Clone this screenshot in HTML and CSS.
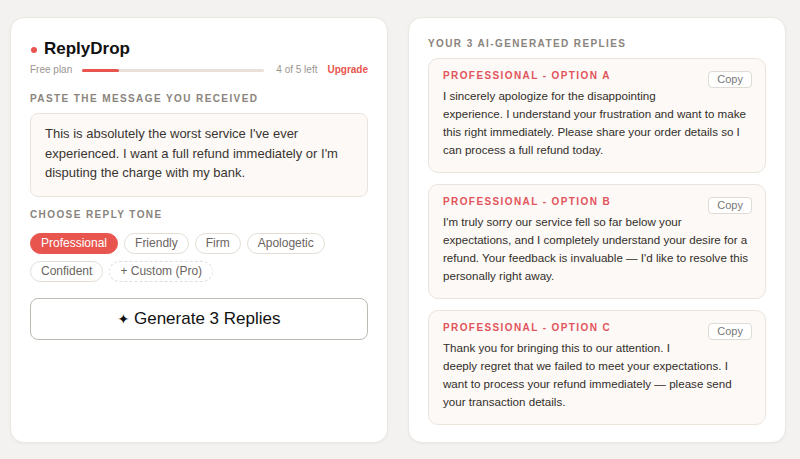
FILE: index.html
```html
<!DOCTYPE html>
<html lang="en">
<head>
  <meta charset="UTF-8">
  <meta name="viewport" content="width=device-width, initial-scale=1.0">
  <title>ReplyDrop</title>
  <link rel="stylesheet" href="styles.css">
</head>
<body>

<div class="app">
  <section class="panel">
    <div class="brand"><span class="brand-dot"></span>ReplyDrop</div>
    <div class="plan">
      <span class="plan-name">Free plan</span>
      <div class="plan-bar"><div class="plan-fill" style="width:20%"></div></div>
      <span class="plan-left">4 of 5 left</span>
      <a class="upgrade" href="#">Upgrade</a>
    </div>

    <div class="label label-message">Paste the message you received</div>
    <div class="message">This is absolutely the worst service I've ever experienced. I want a full refund immediately or I'm disputing the charge with my bank.</div>

    <div class="label label-tone">Choose reply tone</div>
    <div class="tones">
      <button class="tone active">Professional</button>
      <button class="tone">Friendly</button>
      <button class="tone">Firm</button>
      <button class="tone">Apologetic</button>
      <button class="tone">Confident</button>
      <button class="tone custom">+ Custom (Pro)</button>
    </div>

    <button class="generate"><span class="spark">&#10022;</span> Generate 3 Replies</button>
  </section>

  <section class="panel">
    <div class="label label-top">Your 3 AI-generated replies</div>

    <div class="reply">
      <button class="copy">Copy</button>
      <div class="reply-tag">Professional - Option A</div>
      <p>I sincerely apologize for the disappointing experience. I understand your frustration and want to make this right immediately. Please share your order details so I can process a full refund today.</p>
    </div>

    <div class="reply">
      <button class="copy">Copy</button>
      <div class="reply-tag">Professional - Option B</div>
      <p>I'm truly sorry our service fell so far below your expectations, and I completely understand your desire for a refund. Your feedback is invaluable — I'd like to resolve this personally right away.</p>
    </div>

    <div class="reply">
      <button class="copy">Copy</button>
      <div class="reply-tag">Professional - Option C</div>
      <p>Thank you for bringing this to our attention. I deeply regret that we failed to meet your expectations. I want to process your refund immediately — please send your transaction details.</p>
    </div>
  </section>
</div>

</body>
</html>
```

FILE: styles.css
```css
body {
  margin: 0;
  background: #f3f2f0;
  font-family: "Liberation Sans", Arial, sans-serif;
  color: #3a3531;
}
.app {
  display: grid;
  grid-template-columns: 378px 378px;
  gap: 20px;
  padding: 17px 14px 16px 10px;
}
.panel {
  box-sizing: border-box;
  height: 426px;
  background: #fff;
  border: 1px solid #ebe7e2;
  border-radius: 14px;
  box-shadow: 0 1px 3px rgba(0,0,0,0.04);
  padding: 21px 19px 19px;
}

/* brand + plan usage */
.brand {
  display: flex;
  align-items: center;
  font-size: 17px;
  line-height: 20px;
  font-weight: bold;
  color: #111;
}
.brand-dot {
  width: 6px;
  height: 6px;
  border-radius: 50%;
  background: #e8554e;
  margin: 1px 7px 0 1px;
}
.plan {
  display: flex;
  align-items: center;
  gap: 10px;
  margin-top: 4px;
  font-size: 10px;
  line-height: 14px;
  color: #9a958f;
}
.plan-bar {
  flex: 1;
  height: 3px;
  margin-right: 2px;
  background: #e9e0d7;
  border-radius: 2px;
}
.plan-fill {
  height: 100%;
  background: #e8554e;
  border-radius: 2px;
}
.upgrade {
  color: #e8554e;
  font-weight: bold;
  text-decoration: none;
}

/* section labels */
.label {
  font-size: 10px;
  line-height: 14px;
  font-weight: bold;
  letter-spacing: 1.4px;
  text-transform: uppercase;
  color: #8a847d;
}
.label-message {
  margin: 15px 0 7px;
}
.label-tone {
  margin: 11px 0 11px;
}
.label-top {
  margin: -2px 0 7px;
}
.message {
  background: #fcf9f6;
  border: 1px solid #ebe4dc;
  border-radius: 8px;
  padding: 10px 14px 13px;
  font-size: 13px;
  line-height: 19.5px;
}

/* tone chips */
.tones {
  display: flex;
  flex-wrap: wrap;
  gap: 7px 6px;
}
.tone {
  font-family: inherit;
  font-size: 12px;
  line-height: 13px;
  padding: 3px 10px;
  border: 1px solid #e3ddd6;
  border-radius: 999px;
  background: #fff;
  color: #6b655f;
  cursor: pointer;
}
.tone.active {
  background: #e8554e;
  border-color: #e8554e;
  color: #fff;
}
.tone.custom {
  border-style: dashed;
}
.generate {
  display: block;
  width: 100%;
  height: 42px;
  margin-top: 16px;
  font-family: inherit;
  font-size: 17px;
  color: #111;
  background: #fff;
  border: 1px solid #bfbab4;
  border-radius: 8px;
  cursor: pointer;
}
.spark {
  font-family: "DejaVu Sans", sans-serif;
  font-size: 14px;
}

/* generated replies */
.reply {
  background: #fcf9f6;
  border: 1px solid #ebe4dc;
  border-radius: 10px;
  padding: 10px 13px 13px 14px;
  margin-bottom: 11px;
}
.reply:last-child {
  margin-bottom: 0;
}
.reply-tag {
  font-size: 10px;
  line-height: 14px;
  font-weight: bold;
  letter-spacing: 1.4px;
  text-transform: uppercase;
  color: #e2545c;
}
.copy {
  float: right;
  margin: 2px 0 4px 8px;
  padding: 1px 8px;
  font-family: inherit;
  font-size: 11px;
  line-height: 13px;
  color: #777;
  background: #fff;
  border: 1px solid #e0dbd5;
  border-radius: 4px;
  cursor: pointer;
}
.reply p {
  margin: 4px 0 0;
  font-size: 11.6px;
  line-height: 18px;
  color: #332e2a;
}
```
